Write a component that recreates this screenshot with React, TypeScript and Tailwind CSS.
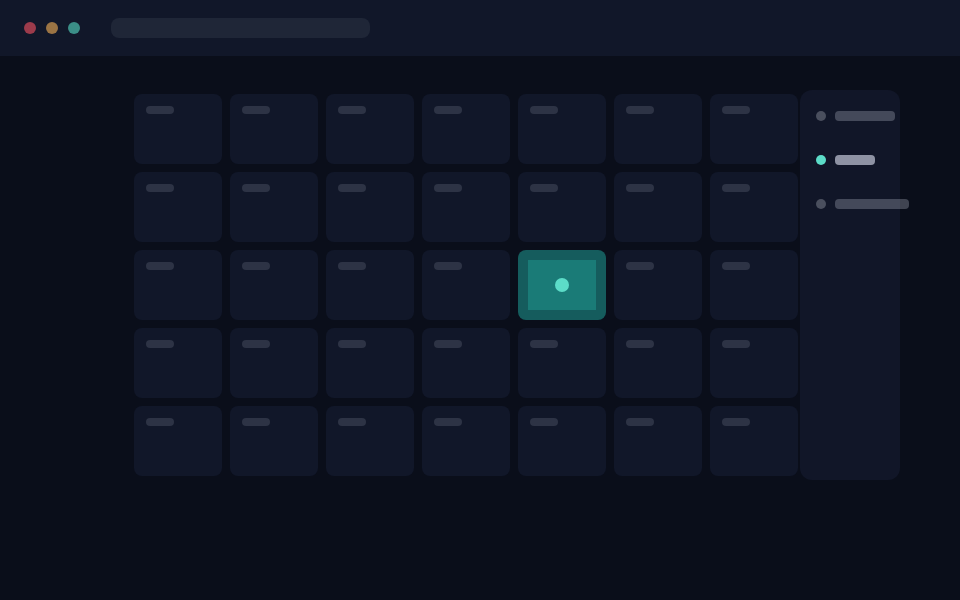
const ROWS = 5;
const COLS = 7;
const ACTIVE = { row: 2, col: 4 };

const Cell = ({ active }: { active: boolean }) => {
  if (active) {
    return (
      <div className="h-[70px] rounded-lg bg-[#155c5d] p-[10px]">
        <div className="flex h-full w-full items-center justify-center bg-[#1a7b77]">
          <span className="h-[14px] w-[14px] rounded-full bg-[#5cdcc8]" />
        </div>
      </div>
    );
  }
  return (
    <div className="h-[70px] rounded-lg bg-[#111729] pl-3 pt-3">
      <div className="h-2 w-7 rounded-full bg-[#2d3345]" />
    </div>
  );
};

const SideItem = ({ width, active }: { width: string; active?: boolean }) => (
  <div className="flex h-[10px] items-center">
    <span
      className={
        active
          ? "h-[10px] w-[10px] shrink-0 rounded-full bg-[#5cdcc8]"
          : "h-[10px] w-[10px] shrink-0 rounded-full bg-[#4a4f5e]"
      }
    />
    <div
      className={
        active
          ? `ml-[9px] h-[10px] shrink-0 ${width} rounded-sm bg-[#8e92a3]`
          : `ml-[9px] h-[10px] shrink-0 ${width} rounded-sm bg-[#9ca3af]/[0.37]`
      }
    />
  </div>
);

const App = () => {
  return (
    <div className="h-[600px] w-[960px] overflow-hidden bg-[#0a0e1a] font-['Liberation_Sans',sans-serif]">
      {/* Title bar */}
      <div className="flex h-14 items-center bg-[#111729] pl-6">
        <div className="flex gap-[10px]">
          <span className="h-3 w-3 rounded-full bg-[#9c3b4b]" />
          <span className="h-3 w-3 rounded-full bg-[#9b7444]" />
          <span className="h-3 w-3 rounded-full bg-[#3b8e87]" />
        </div>
        <div className="ml-[31px] h-5 w-[259px] rounded-lg bg-[#1f2637]" />
      </div>

      <div className="flex items-start pl-[134px]">
        {/* Board */}
        <div className="mt-[38px] grid w-[664px] grid-cols-7 gap-2">
          {Array.from({ length: ROWS * COLS }).map((_, i) => {
            const row = Math.floor(i / COLS);
            const col = i % COLS;
            return <Cell key={i} active={row === ACTIVE.row && col === ACTIVE.col} />;
          })}
        </div>

        {/* Side panel */}
        <div className="ml-[2px] mt-[34px] flex h-[390px] w-[100px] flex-col gap-[34px] rounded-xl bg-[#111628] pl-4 pt-[21px]">
          <SideItem width="w-[60px]" />
          <SideItem width="w-[40px]" active />
          <SideItem width="w-[74px]" />
        </div>
      </div>
    </div>
  );
};

export default App;
